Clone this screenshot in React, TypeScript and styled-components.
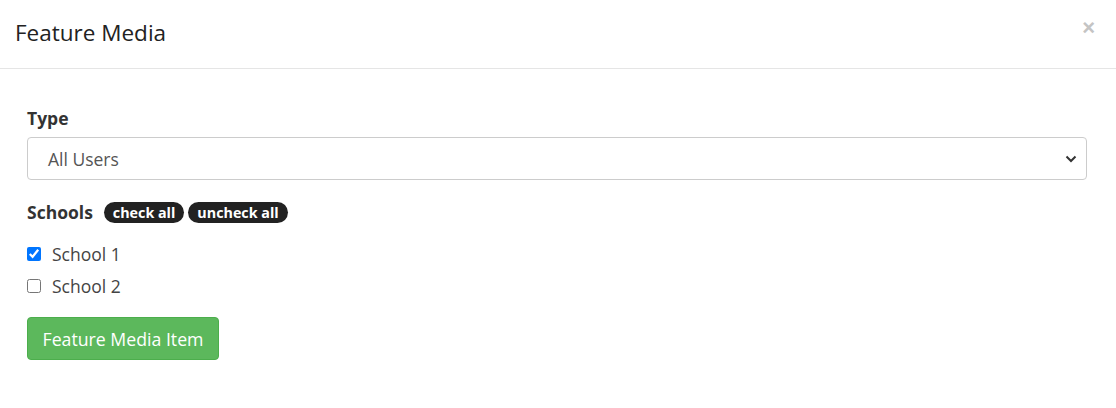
import React, { useState } from 'react';
import styled, { createGlobalStyle } from 'styled-components';

const GlobalStyle = createGlobalStyle`
  body {
    margin: 0;
    background: #fff;
    font-family: "Open Sans", "Noto Sans", sans-serif;
    color: #333;
  }
`;

const Modal = styled.div`
  width: 1116px;
  height: 408px;
  background: #fff;
  display: flex;
  flex-direction: column;
`;

const Header = styled.div`
  display: flex;
  align-items: flex-start;
  justify-content: space-between;
  height: 69px;
  box-sizing: border-box;
  padding: 17px 15px 0 15px;
  border-bottom: 1px solid #e5e5e5;
`;

const Title = styled.h4`
  margin: 0;
  font-size: 22.5px;
  font-weight: 400;
  line-height: 32px;
  color: #222;
`;

const Close = styled.button`
  border: none;
  background: none;
  padding: 0;
  margin-top: 1px;
  margin-right: 6px;
  font-family: "Liberation Sans", sans-serif;
  font-size: 22px;
  font-weight: 700;
  line-height: 20px;
  color: #c4c4c4;
  cursor: pointer;
`;

const Body = styled.form`
  display: flex;
  flex-direction: column;
  padding: 37px 29px 0 27px;
`;

const Label = styled.label`
  display: block;
  font-size: 17.5px;
  font-weight: 700;
  color: #333;
  line-height: 24px;
`;

const Select = styled.div`
  margin-top: 7px;
  height: 43px;
  box-sizing: border-box;
  border: 1px solid #ccc;
  border-radius: 4px;
  display: flex;
  align-items: center;
  justify-content: space-between;
  padding: 0 9px 0 20px;
  font-size: 17.5px;
  color: #555;
`;

const SchoolsRow = styled.div`
  display: flex;
  align-items: center;
  gap: 4px;
  margin-top: 20px;
`;

const Pill = styled.button`
  border: none;
  background: #222;
  color: #fff;
  font-family: "Open Sans", sans-serif;
  font-weight: 700;
  font-size: 14.3px;
  line-height: 21px;
  padding: 0 9px;
  border-radius: 11px;
  cursor: pointer;
`;

const CheckList = styled.div`
  display: flex;
  flex-direction: column;
  margin-top: 18px;
  gap: 8px;
`;

const CheckRow = styled.label`
  display: flex;
  align-items: center;
  gap: 11px;
  font-size: 17.5px;
  color: #444;
  line-height: 24px;
`;

const Box = styled.input`
  margin: 0 0 0 0;
  width: 14px;
  height: 14px;
  accent-color: #0075ff;
`;

const Submit = styled.button`
  align-self: flex-start;
  margin-top: 19px;
  width: 192px;
  height: 43px;
  border: 1px solid #4cae4c;
  border-radius: 4px;
  background: #5cb85c;
  color: #fff;
  font-family: "Open Sans", sans-serif;
  font-size: 17.7px;
  padding: 0;
  cursor: pointer;
`;

export default function App() {
  const [checked, setChecked] = useState<Record<string, boolean>>({ 'School 1': true, 'School 2': false });
  const schools = ['School 1', 'School 2'];

  return (
    <Modal>
      <GlobalStyle />
      <Header>
        <Title>Feature Media</Title>
        <Close type="button">×</Close>
      </Header>
      <Body onSubmit={(e) => e.preventDefault()}>
        <Label>Type</Label>
        <Select>
          <span>All Users</span>
          <svg width="12" height="8" viewBox="0 0 12 8">
            <path d="M1.5 1.5 L6 6 L10.5 1.5" stroke="#333" strokeWidth="2" fill="none" />
          </svg>
        </Select>
        <SchoolsRow>
          <Label>Schools</Label>
          <span style={{ width: 3 }} />
          <Pill type="button" onClick={() => setChecked({ 'School 1': true, 'School 2': true })}>check all</Pill>
          <Pill type="button" onClick={() => setChecked({ 'School 1': false, 'School 2': false })}>uncheck all</Pill>
        </SchoolsRow>
        <CheckList>
          {schools.map((s) => (
            <CheckRow key={s}>
              <Box
                type="checkbox"
                checked={checked[s]}
                onChange={() => setChecked({ ...checked, [s]: !checked[s] })}
              />
              {s}
            </CheckRow>
          ))}
        </CheckList>
        <Submit type="submit">Feature Media Item</Submit>
      </Body>
    </Modal>
  );
}
